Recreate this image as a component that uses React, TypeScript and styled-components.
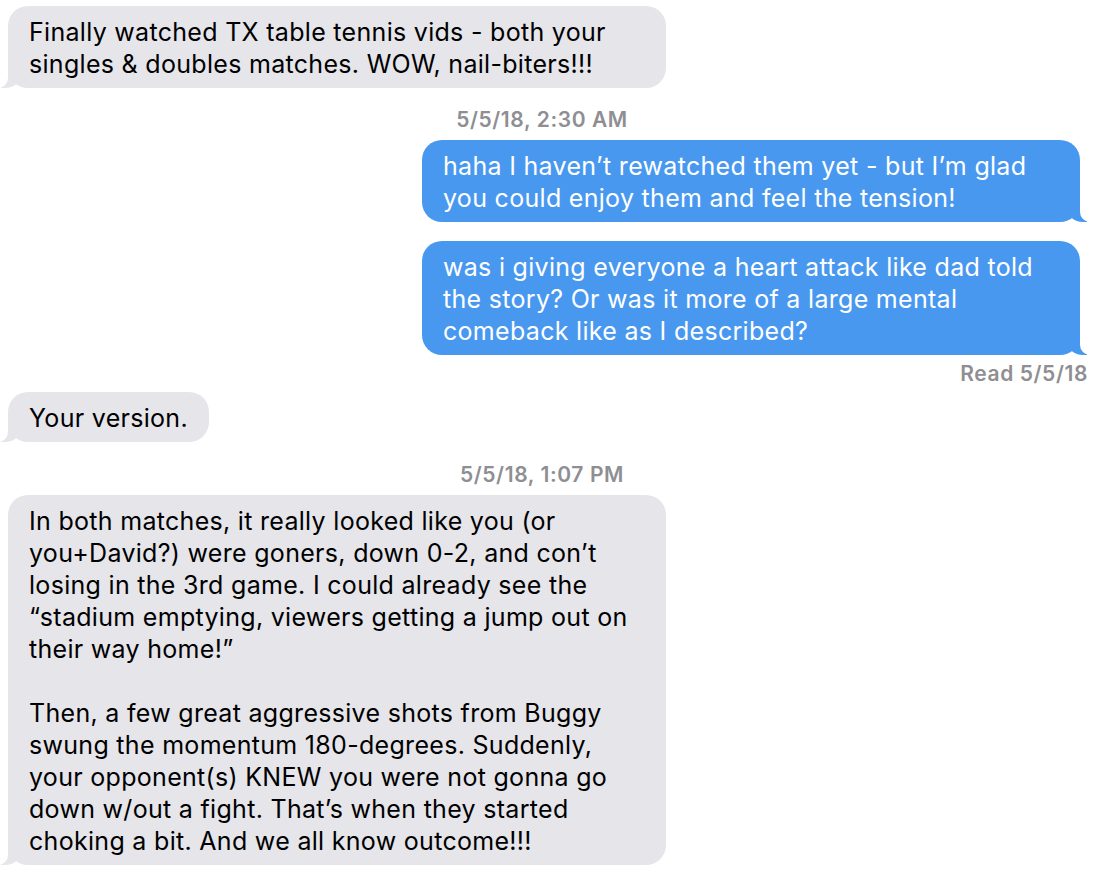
import styled, { createGlobalStyle, css } from 'styled-components';

const GlobalStyle = createGlobalStyle`
  html, body {
    margin: 0;
    padding: 0;
    background: #ffffff;
  }
  body {
    font-family: Inter, "Liberation Sans", Arial, sans-serif;
    -webkit-font-smoothing: antialiased;
  }
`

const GRAY = '#e5e5ea'
const BLUE = '#4898f0'

const Thread = styled.div`
  display: flex;
  flex-direction: column;
  padding: 6px 14px 0 8px;
  width: 1080px;
`

const Bubble = styled.div<{ $me?: boolean; $wide?: boolean }>`
  position: relative;
  box-sizing: border-box;
  padding: 10px 21px 8px;
  border-radius: 20px;
  font-size: 25px;
  line-height: 32px;
  white-space: nowrap;
  letter-spacing: 0.3px;
  width: ${p => (p.$wide ? '658px' : 'auto')};
  align-self: ${p => (p.$me ? 'flex-end' : 'flex-start')};
  margin-right: ${p => (p.$me ? '8px' : '0')};
  background: ${p => (p.$me ? BLUE : GRAY)};
  color: ${p => (p.$me ? '#ffffff' : '#000000')};

  &::before,
  &::after {
    content: "";
    position: absolute;
    bottom: 0;
    height: 20px;
  }

  ${p => p.$me ? css`
    &::before {
      right: -7px;
      border-right: 20px solid ${BLUE};
      border-bottom-left-radius: 16px 14px;
    }
    &::after {
      right: -10px;
      width: 10px;
      background: #ffffff;
      border-bottom-left-radius: 10px;
    }
  ` : css`
    &::before {
      left: -7px;
      border-left: 20px solid ${GRAY};
      border-bottom-right-radius: 16px 14px;
    }
    &::after {
      left: -10px;
      width: 10px;
      background: #ffffff;
      border-bottom-right-radius: 10px;
    }
  `}
`

const Stamp = styled.div`
  text-align: center;
  padding-right: 12px;
  font-size: 21px;
  line-height: 24px;
  font-weight: 600;
  letter-spacing: 0.6px;
  color: #8e8e93;
`

const ReadReceipt = styled.div`
  align-self: flex-end;
  font-size: 21px;
  line-height: 24px;
  font-weight: 600;
  letter-spacing: 0.6px;
  color: #8e8e93;
`

const Gap = styled.div<{ $h: number }>`
  height: ${p => p.$h}px;
  flex: none;
`

export default function App() {
  return (
    <>
      <GlobalStyle />
      <Thread>
        <Bubble $wide>
          Finally watched TX table tennis vids - both your<br />
          singles &amp; doubles matches. WOW, nail-biters!!!
        </Bubble>
        <Gap $h={20} />
        <Stamp>5/5/18, 2:30 AM</Stamp>
        <Gap $h={8} />
        <Bubble $me $wide>
          haha I haven’t rewatched them yet - but I’m glad<br />
          you could enjoy them and feel the tension!
        </Bubble>
        <Gap $h={19} />
        <Bubble $me $wide>
          was i giving everyone a heart attack like dad told<br />
          the story? Or was it more of a large mental<br />
          comeback like as I described?
        </Bubble>
        <Gap $h={7} />
        <ReadReceipt>Read 5/5/18</ReadReceipt>
        <Gap $h={6} />
        <Bubble>Your version.</Bubble>
        <Gap $h={21} />
        <Stamp>5/5/18, 1:07 PM</Stamp>
        <Gap $h={8} />
        <Bubble $wide>
          In both matches, it really looked like you (or<br />
          you+David?) were goners, down 0-2, and con’t<br />
          losing in the 3rd game. I could already see the<br />
          “stadium emptying, viewers getting a jump out on<br />
          their way home!”<br />
          <br />
          Then, a few great aggressive shots from Buggy<br />
          swung the momentum 180-degrees. Suddenly,<br />
          your opponent(s) KNEW you were not gonna go<br />
          down w/out a fight. That’s when they started<br />
          choking a bit. And we all know outcome!!!
        </Bubble>
      </Thread>
    </>
  )
}
